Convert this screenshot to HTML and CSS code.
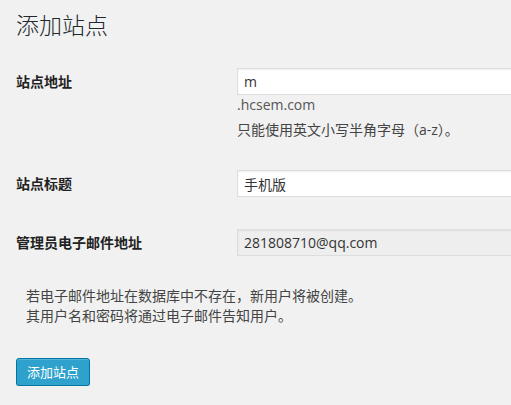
FILE: index.html
```html
<!DOCTYPE html>
<html lang="zh-CN">
<head>
<meta charset="utf-8">
<link rel="stylesheet" href="styles.css">
</head>
<body>
<div class="wrap">
  <h1 class="title">添加站点</h1>
  <form class="form">
    <div class="row row-first">
      <label class="label">站点地址</label>
      <div class="field">
        <div class="clip"><input class="input" type="text" value="m"></div>
        <div class="hint">.hcsem.com</div>
        <p class="desc">只能使用英文小写半角字母（a-z）。</p>
      </div>
    </div>
    <div class="row row-title">
      <label class="label">站点标题</label>
      <div class="field">
        <div class="clip"><input class="input" type="text" value="手机版"></div>
      </div>
    </div>
    <div class="row row-email">
      <label class="label">管理员电子邮件地址</label>
      <div class="field">
        <div class="clip"><input class="input input-readonly" type="text" value="281808710@qq.com" readonly></div>
      </div>
    </div>
    <p class="note">若电子邮件地址在数据库中不存在，新用户将被创建。<br>其用户名和密码将通过电子邮件告知用户。</p>
    <button class="button" type="button">添加站点</button>
  </form>
</div>
</body>
</html>
```

FILE: styles.css
```css
html, body {
  margin: 0;
  padding: 0;
  background: #f1f1f1;
  overflow: hidden;
}
body {
  font-family: "Open Sans", "Noto Sans CJK SC", sans-serif;
  font-size: 14px;
  color: #444;
}
.wrap {
  padding: 0 0 0 16px;
}
.title {
  margin: 0;
  padding-top: 11px;
  font-size: 23px;
  line-height: 29px;
  font-weight: 300;
  color: #23282d;
}
.form {
  display: flex;
  flex-direction: column;
  align-items: flex-start;
}
.row {
  display: grid;
  grid-template-columns: 221px 1fr;
  width: 100%;
}
.row-first { margin-top: 28px; }
.row-title { margin-top: 30px; }
.row-email { margin-top: 32px; }
.label {
  font-weight: 700;
  color: #222;
  line-height: 27px;
  font-size: 14px;
}
.field {
  display: flex;
  flex-direction: column;
  min-width: 0;
}
.clip {
  overflow: hidden;
}
.input {
  display: block;
  box-sizing: border-box;
  width: calc(100% + 40px);
  height: 27px;
  margin: 0;
  padding: 0 6px;
  border: 1px solid #ddd;
  background: #fff;
  box-shadow: inset 0 1px 2px rgba(0,0,0,.07);
  font-family: "Open Sans", "Noto Sans CJK SC", sans-serif;
  font-size: 14px;
  color: #333;
  outline: none;
}
.input-readonly {
  background: #eee;
}
.hint {
  line-height: 20px;
  color: #555;
}
.desc {
  margin: 5px 0 0;
  line-height: 20px;
  color: #444;
}
.note {
  margin: 30px 0 0;
  padding-left: 10px;
  line-height: 20px;
  color: #444;
}
.button {
  margin-top: 32px;
  box-sizing: border-box;
  width: 74px;
  height: 28px;
  padding: 0;
  border: 1px solid #0074a2;
  border-radius: 3px;
  background: #2ea2cc;
  color: #fff;
  font-family: "Open Sans", "Noto Sans CJK SC", sans-serif;
  font-size: 13px;
  line-height: 26px;
  box-shadow: inset 0 1px 0 rgba(120,200,230,.5), 0 1px 0 rgba(0,0,0,.15);
}
```
